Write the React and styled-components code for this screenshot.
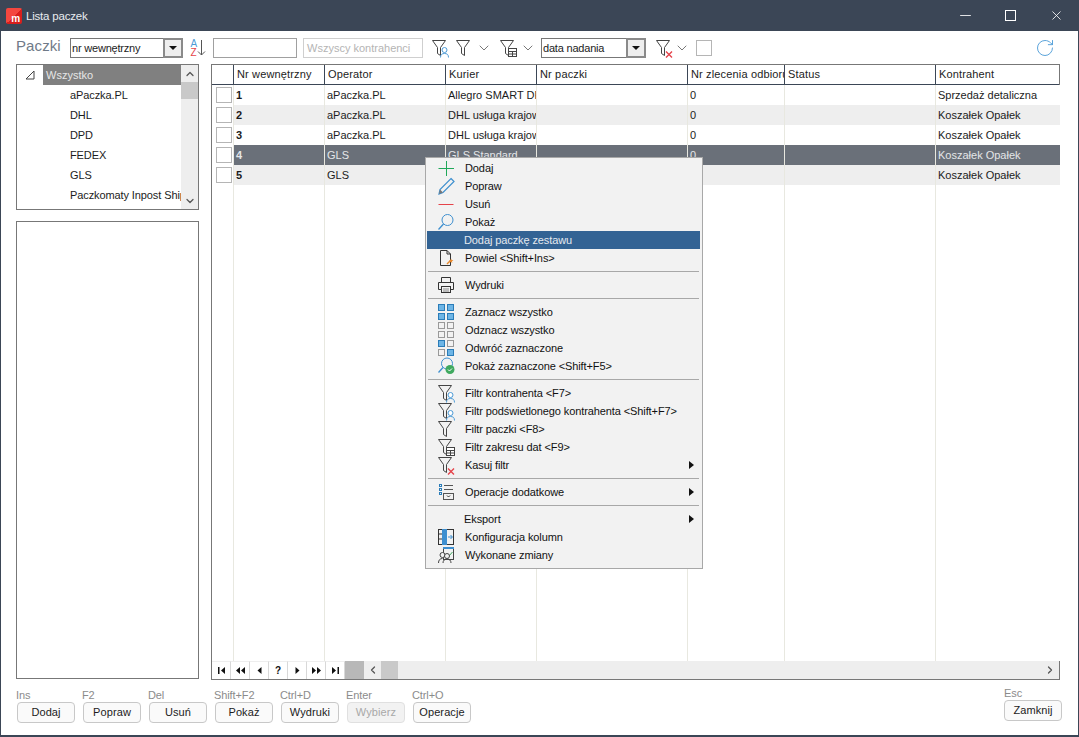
import React from "react";
import styled, { createGlobalStyle } from "styled-components";
import { ChevronDown, ChevronUp, ChevronLeft, ChevronRight, Minus, X, RotateCw } from "lucide-react";

const GlobalStyle = createGlobalStyle`
  html, body { margin: 0; padding: 0; background: #fff; }
  body { font-family: "Liberation Sans", Arial, sans-serif; font-size: 11px; color: #1c1c1c; }
  * { box-sizing: border-box; }
`;

const Window = styled.div`
  position: relative;
  width: 1079px;
  height: 737px;
  display: flex;
  flex-direction: column;
  border: 1px solid #3b4656;
  border-top: 0;
  border-bottom-width: 2px;
  overflow: hidden;
`;
const TitleBar = styled.div`
  height: 31px;
  flex: none;
  margin: 0 -1px;
  background: #3b4656;
  display: flex;
  align-items: center;
  padding-left: 6px;
  color: #e9ecef;
  font-size: 11.5px;
  letter-spacing: -0.2px;
`;
const AppLogo = styled.div`
  width: 16px;
  height: 16px;
  border-radius: 2px;
  background: linear-gradient(135deg, #f4473f 0 50%, #d81f1c 50%);
  color: #fff;
  font-weight: 700;
  font-size: 10px;
  line-height: 11px;
  text-align: right;
  padding: 5px 2px 0 0;
  margin-right: 4px;
`;
const WinControls = styled.div`
  margin-left: auto;
  display: flex;
  align-items: center;
  padding-right: 15px;
  gap: 30px;
  color: #fff;
`;
const MaximizeBox = styled.div`
  width: 11px;
  height: 11px;
  margin: 0 3px 0 1px;
  border: 1px solid #fff;
`;
const Content = styled.div`
  flex: 1;
  min-height: 0;
  display: flex;
  flex-direction: column;
  padding: 7px 18px 0 15px;
`;
const Toolbar = styled.div`
  height: 20px;
  flex: none;
  display: flex;
  align-items: center;
`;
const PageLabel = styled.div`
  width: 54px;
  font-size: 15px;
  letter-spacing: 0.1px;
  color: #6f7a88;
  margin-top: -5px;
`;
const ToolIcon = styled.div`
  margin-left: ${(p) => p.$ml || 0}px;
  display: flex;
  align-items: center;
  color: #555;
`;
const RefreshIcon = styled.div`
  margin-left: auto;
  margin-right: 5px;
  display: flex;
  color: #4d9bd6;
`;
const Select = styled.div`
  width: ${(p) => p.$w}px;
  margin-left: ${(p) => p.$ml || 0}px;
  height: 20px;
  display: flex;
  border: 1px solid #777;
  font-size: 11px;
  letter-spacing: -0.2px;
`;
const SelectText = styled.div`
  flex: 1;
  padding-left: 1px;
  line-height: 18px;
  white-space: nowrap;
  overflow: hidden;
`;
const SelectButton = styled.div`
  width: 20px;
  border: 2px solid #8a8a8a;
  margin: -1px;
  background: #eee;
  display: flex;
  align-items: center;
  justify-content: center;
  &::after {
    content: "";
    border: 4px solid transparent;
    border-top: 4px solid #111;
    border-bottom: 0;
  }
`;
const TextInput = styled.div`
  width: ${(p) => p.$w}px;
  margin-left: 6px;
  height: 20px;
  line-height: 18px;
  padding-left: 3px;
  font-size: 11px;
  border: 1px solid ${(p) => (p.$light ? "#cfcfcf" : "#a0a0a0")};
  color: #b4b4b4;
  white-space: nowrap;
  overflow: hidden;
`;
const EmptyCheck = styled.div`
  width: 16px;
  height: 16px;
  margin-left: ${(p) => p.$ml || 0}px;
  border: 1px solid #b5b5b5;
  background: #fff;
`;
const Main = styled.div`
  flex: none;
  height: 616px;
  margin-top: 6px;
  display: flex;
  gap: 12px;
`;
const LeftColumn = styled.div`
  width: 183px;
  display: flex;
  flex-direction: column;
  gap: 11px;
`;
const TreeBox = styled.div`
  height: 146px;
  flex: none;
  display: flex;
  border: 1px solid #777;
`;
const TreeList = styled.div`
  flex: 1;
  min-width: 0;
  overflow: hidden;
`;
const TreeRoot = styled.div`
  height: 20px;
  display: flex;
  align-items: center;
  padding-left: 8px;
`;
const RootLabel = styled.div`
  margin-left: 8px;
  flex: 1;
  height: 20px;
  line-height: 20px;
  padding-left: 3px;
  background: #808080;
  color: #e6e6e6;
`;
const TreeItem = styled.div`
  height: 20px;
  line-height: 20px;
  padding-left: 53px;
  white-space: nowrap;
  letter-spacing: -0.1px;
`;
const VScroll = styled.div`
  width: 17px;
  flex: none;
  background: #eeeeee;
  display: flex;
  flex-direction: column;
  align-items: center;
`;
const VScrollArrow = styled.div`
  height: 17px;
  display: flex;
  align-items: center;
  justify-content: center;
  margin-top: ${(p) => (p.$end ? "auto" : 0)};
  color: #555;
`;
const VThumb = styled.div`
  width: 17px;
  height: 17px;
  background: #c9c9c9;
`;
const DetailBox = styled.div`
  flex: 1;
  margin-bottom: 1px;
  border: 1px solid #777;
`;
const GridBox = styled.div`
  flex: 1;
  min-width: 0;
  display: flex;
  flex-direction: column;
  border: 1px solid #777;
`;
const COLS = "22px 91px 121px 91px 151px 97px 151px 124px";
const HeaderRow = styled.div`
  display: grid;
  grid-template-columns: ${COLS};
  height: 20px;
  border-bottom: 1px solid #3b4656;
  flex: none;
`;
const HeaderCell = styled.div`
  border-right: 1px solid #3b4656;
  padding-left: 3px;
  line-height: 19px;
  white-space: nowrap;
  overflow: hidden;
  letter-spacing: 0.15px;
  &:last-child { border-right: 0; }
`;
const GridRow = styled.div`
  display: grid;
  grid-template-columns: ${COLS};
  height: ${(p) => (p.$fill ? "auto" : "20px")};
  flex: ${(p) => (p.$fill ? "1" : "none")};
`;
const CheckCell = styled.div`
  background: #fff;
  border-right: 1px solid #e8e8e0;
  padding: 2px 0 0 4px;
`;
const Cell = styled.div`
  background: ${(p) => (p.$selected ? "#6a7079" : p.$alt ? "#eeeeee" : "#fff")};
  color: ${(p) => (p.$selected ? "#e4e6e8" : "#1c1c1c")};
  font-weight: ${(p) => (p.$bold ? 700 : 400)};
  border-right: 1px solid #e8e8e0;
  padding-left: 2px;
  line-height: 20px;
  white-space: nowrap;
  overflow: hidden;
  &:last-child { border-right: 0; }
`;
const BottomBar = styled.div`
  height: 18px;
  flex: none;
  display: flex;
  background: #eeeeee;
`;
const NavButton = styled.div`
  width: 19px;
  background: #fff;
  border-right: 1px solid #d8d8d8;
  border-top: 1px solid #eee;
  display: flex;
  align-items: center;
  justify-content: center;
  font-weight: 700;
  font-size: 10px;
  color: #111;
`;
const NavGap = styled.div`
  width: 19px;
  background: #b8b8b8;
`;
const HArrow = styled.div`
  width: 17px;
  display: flex;
  align-items: center;
  justify-content: center;
  color: #555;
  margin-left: ${(p) => (p.$end ? "auto" : 0)};
  margin-right: ${(p) => (p.$end ? "1px" : 0)};
`;
const HThumb = styled.div`
  width: 17px;
  background: #c9c9c9;
`;
const Footer = styled.div`
  flex: 1;
  display: flex;
  justify-content: space-between;
  padding-top: 9px;
`;
const FooterGroup = styled.div`
  display: flex;
`;
const Action = styled.div`
  width: 66px;
`;
const Hint = styled.div`
  height: 13px;
  line-height: 13px;
  color: #8b8b8b;
  font-size: 11px;
  letter-spacing: -0.1px;
  white-space: nowrap;
`;
const Button = styled.div`
  width: 58px;
  height: 21px;
  margin-left: ${(p) => (p.$flush ? 0 : 1)}px;
  border: 1px solid #c8c8c8;
  border-radius: 4px;
  background: #fafafa;
  text-align: center;
  line-height: 19px;
  letter-spacing: 0.1px;
  color: ${(p) => (p.$disabled ? "#a8a8a8" : "#1c1c1c")};
  ${(p) => p.$disabled && "background: #f2f2f2; border-color: #e0e0e0;"}
`;
const CloseAction = styled.div`
  width: 58px;
  margin: -2px -2px 0 0;
`;
const Menu = styled.div`
  position: absolute;
  left: 424px;
  top: 157px;
  width: 278px;
  height: 412px;
  background: #f2f2f2;
  border: 1px solid #a8a8a8;
  padding: 1px 2px 0 1px;
`;
const MenuItem = styled.div`
  height: 18px;
  display: flex;
  align-items: center;
  position: relative;
  padding-left: ${(p) => (p.$noIcon ? 37 : 38)}px;
  letter-spacing: -0.1px;
  white-space: nowrap;
  background: ${(p) => (p.$active ? "#336394" : "transparent")};
  color: ${(p) => (p.$active ? "#e4e9ef" : "#111")};
`;
const MenuIcon = styled.span`
  position: absolute;
  left: 9px;
  top: 0;
  width: 20px;
  height: 18px;
  display: flex;
  align-items: center;
  justify-content: center;
`;
const SubArrow = styled.span`
  position: absolute;
  right: 6px;
  top: 5px;
  border: 4px solid transparent;
  border-left: 5px solid #111;
  border-right: 0;
`;
const MenuSep = styled.div`
  height: 9px;
  margin: 0 1px;
  display: flex;
  align-items: center;
  &::after {
    content: "";
    flex: 1;
    height: 1px;
    margin-top: -1px;
    background: #a8a8a8;
  }
`;

const Svg = ({ w = 20, h = 18, children }) => (
  <svg width={w} height={h} viewBox={`0 0 ${w} ${h}`} fill="none" style={{ display: "block" }}>
    {children}
  </svg>
);

const FUNNEL = "M1.5 1.5H14.5L9.5 8.5V16.5L6.5 14.5V8.5Z";

// small funnel with an optional badge in the lower right
const FunnelIcon = ({ badge }) => (
  <Svg w={19} h={19}>
    <path d={FUNNEL} stroke="#444" strokeWidth="1" />
    {badge === "user" && (
      <g stroke="#4d9bd6" strokeWidth="1">
        <circle cx="13.5" cy="11" r="2.5" fill="#fff" />
        <path d="M9.5 18.5C9.5 15.5 11 14.5 13.5 14.5S17.5 15.5 17.5 18.5" />
      </g>
    )}
    {badge === "table" && (
      <g stroke="#444" strokeWidth="1">
        <rect x="9.5" y="9.5" width="8" height="8" fill="#fff" />
        <path d="M9.5 12.5H17.5M9.5 15H17.5M13.5 12.5V17.5" />
      </g>
    )}
    {badge === "x" && <path d="M11 12.5L17 18.5M17 12.5L11 18.5" stroke="#e5434a" strokeWidth="1.4" />}
  </Svg>
);

const SortIcon = () => (
  <Svg w={18} h={18}>
    <text x="1.5" y="8" fontSize="10" fill="#4d9bd6" fontFamily="Liberation Sans">A</text>
    <text x="1.5" y="17" fontSize="10" fill="#e5434a" fontFamily="Liberation Sans">Z</text>
    <path d="M12.5 1V16M9 12.5L12.5 16L16 12.5" stroke="#555" />
  </Svg>
);

const PlusIcon = () => (
  <Svg>
    <path d="M10.5 2V17M2.5 9.5H18" stroke="#21a85a" />
  </Svg>
);
const PencilIcon = () => (
  <Svg>
    <path d="M15 1.5L18 4.5L7 15.5L3 17L4 12.5Z" stroke="#3f90cf" strokeWidth="1.2" />
    <path d="M3 17L4 12.5L7 15.5Z" fill="#777" />
  </Svg>
);
const MinusIcon = () => (
  <Svg>
    <path d="M2.5 9.5H17.5" stroke="#e5434a" />
  </Svg>
);
const SearchIcon = () => (
  <Svg>
    <circle cx="11.5" cy="7" r="5.5" stroke="#3f90cf" />
    <path d="M7.5 11L2.5 16.5" stroke="#3f90cf" strokeWidth="1.3" />
  </Svg>
);
const CopyIcon = () => (
  <Svg>
    <path d="M4.5 1.5H11L14.5 5V16.5H4.5Z" stroke="#333" />
    <path d="M11 1.5V5H14.5" stroke="#333" />
    <path d="M11 15L15 11" stroke="#e98a2f" strokeWidth="1.5" />
    <path d="M15 9.5L15.7 11L17.5 11.3L16 12.3L16.3 14L15 13L13.5 13.5L14.2 12L13 11L14.7 11Z" fill="#e98a2f" />
  </Svg>
);
const PrinterIcon = () => (
  <Svg>
    <path d="M5.5 6V1.5H14.5V6M5.5 13.5H2.5V6.5H17.5V13.5H14.5" stroke="#333" />
    <rect x="5.5" y="10.5" width="9" height="6" stroke="#333" />
    <path d="M7 13H13M7 15H13" stroke="#888" />
  </Svg>
);
const GRID_COORDS = [
  [2, 1],
  [11, 1],
  [2, 10],
  [11, 10],
];
const GridIcon = ({ filled }) => (
  <Svg>
    {GRID_COORDS.map(([x, y], i) => (
      <rect
        key={i}
        x={x + 0.5}
        y={y + 0.5}
        width="6"
        height="6"
        fill={filled[i] ? "#6db5e6" : "#f2f2f2"}
        stroke={filled[i] ? "#2a7cb8" : "#999"}
      />
    ))}
  </Svg>
);
const SearchOkIcon = () => (
  <Svg>
    <circle cx="11" cy="6.5" r="5.5" stroke="#3f90cf" />
    <path d="M7 10.5L2.5 15.5" stroke="#3f90cf" strokeWidth="1.3" />
    <circle cx="14" cy="12.5" r="4.5" fill="#3fa95f" />
    <path d="M12 12.5L13.5 14L16 11.5" stroke="#fff" />
  </Svg>
);
const OptionsIcon = () => (
  <Svg>
    <g stroke="#2a7cb8">
      <rect x="3.5" y="1.5" width="2" height="2" />
      <rect x="3.5" y="5.5" width="2" height="2" />
      <rect x="3.5" y="9.5" width="2" height="2" />
    </g>
    <path d="M8 2.5H17M8 6.5H17" stroke="#555" />
    <rect x="7.5" y="10.5" width="10" height="6" stroke="#555" />
    <path d="M11 12.5L12.5 14L14 12.5" stroke="#333" />
  </Svg>
);
const ColumnsIcon = () => (
  <Svg>
    <rect x="2.5" y="1.5" width="15" height="15" stroke="#333" />
    <rect x="6" y="1" width="5" height="16" fill="#3d8fd0" />
    <path d="M2.5 6H6M2.5 11H6" stroke="#333" />
    <path d="M12 9H16M14.5 7L16.5 9L14.5 11" stroke="#3d8fd0" />
  </Svg>
);
const ChangesIcon = () => (
  <Svg>
    <rect x="7.5" y="1.5" width="10" height="12" fill="#f2f2f2" stroke="#444" />
    <path d="M7 2H18" stroke="#3d8fd0" strokeWidth="2" />
    <path d="M11 8L13 10L16.5 6" stroke="#3fa95f" />
    <circle cx="6.5" cy="9" r="2.5" fill="#f2f2f2" stroke="#444" />
    <circle cx="11" cy="10" r="2.5" fill="#f2f2f2" stroke="#444" />
    <path d="M2.5 17C2.5 14 4 12.5 6.5 12.5M7 17C7 14.5 8.5 13 11 13S15 14.5 15 17" stroke="#444" />
  </Svg>
);

const NavGlyph = ({ d }) => (
  <Svg w={11} h={9}>
    <path d={d} fill="#111" />
  </Svg>
);
const NAV_GLYPHS = [
  "M2 1H3.5V8H2ZM9 1V8L5 4.5Z",
  "M5 1V8L1 4.5ZM10 1V8L6 4.5Z",
  "M7.5 1V8L3.5 4.5Z",
  null,
  "M3.5 1V8L7.5 4.5Z",
  "M1 1V8L5 4.5ZM6 1V8L10 4.5Z",
  "M2 1V8L6 4.5ZM7.5 1H9V8H7.5Z",
];

const COLUMNS = ["", "Nr wewnętrzny", "Operator", "Kurier", "Nr paczki", "Nr zlecenia odbioru", "Status", "Kontrahent"];
const ROWS = [
  { cells: ["1", "aPaczka.PL", "Allegro SMART DPD", "", "0", "", "Sprzedaż detaliczna"] },
  { alt: true, cells: ["2", "aPaczka.PL", "DHL usługa krajowa", "", "0", "", "Koszałek Opałek"] },
  { cells: ["3", "aPaczka.PL", "DHL usługa krajowa", "", "0", "", "Koszałek Opałek"] },
  { selected: true, cells: ["4", "GLS", "GLS Standard", "", "0", "", "Koszałek Opałek"] },
  { alt: true, cells: ["5", "GLS", "GLS Standard", "", "0", "", "Koszałek Opałek"] },
];
const CARRIERS = ["aPaczka.PL", "DHL", "DPD", "FEDEX", "GLS", "Paczkomaty Inpost Shipx"];
const ACTIONS = [
  ["Ins", "Dodaj"],
  ["F2", "Popraw"],
  ["Del", "Usuń"],
  ["Shift+F2", "Pokaż"],
  ["Ctrl+D", "Wydruki"],
  ["Enter", "Wybierz", true],
  ["Ctrl+O", "Operacje"],
];

const MENU = [
  { label: "Dodaj", icon: <PlusIcon /> },
  { label: "Popraw", icon: <PencilIcon /> },
  { label: "Usuń", icon: <MinusIcon /> },
  { label: "Pokaż", icon: <SearchIcon /> },
  { label: "Dodaj paczkę zestawu", active: true },
  { label: "Powiel <Shift+Ins>", icon: <CopyIcon /> },
  { sep: true },
  { label: "Wydruki", icon: <PrinterIcon /> },
  { sep: true },
  { label: "Zaznacz wszystko", icon: <GridIcon filled={[1, 1, 1, 1]} /> },
  { label: "Odznacz wszystko", icon: <GridIcon filled={[0, 0, 0, 0]} /> },
  { label: "Odwróć zaznaczone", icon: <GridIcon filled={[1, 0, 0, 1]} /> },
  { label: "Pokaż zaznaczone <Shift+F5>", icon: <SearchOkIcon /> },
  { sep: true },
  { label: "Filtr kontrahenta <F7>", icon: <FunnelIcon badge="user" /> },
  { label: "Filtr podświetlonego kontrahenta <Shift+F7>", icon: <FunnelIcon badge="user" /> },
  { label: "Filtr paczki <F8>", icon: <FunnelIcon /> },
  { label: "Filtr zakresu dat <F9>", icon: <FunnelIcon badge="table" /> },
  { label: "Kasuj filtr", icon: <FunnelIcon badge="x" />, sub: true },
  { sep: true },
  { label: "Operacje dodatkowe", icon: <OptionsIcon />, sub: true },
  { sep: true },
  { label: "Eksport", sub: true },
  { label: "Konfiguracja kolumn", icon: <ColumnsIcon /> },
  { label: "Wykonane zmiany", icon: <ChangesIcon /> },
];

export default function App() {
  return (
    <>
      <GlobalStyle />
      <Window>
        <TitleBar>
          <AppLogo>m</AppLogo>
          Lista paczek
          <WinControls>
            <Minus size={17} strokeWidth={1.2} />
            <MaximizeBox />
            <X size={15} strokeWidth={1.3} />
          </WinControls>
        </TitleBar>
        <Content>
          <Toolbar>
            <PageLabel>Paczki</PageLabel>
            <Select $w={113}>
              <SelectText>nr wewnętrzny</SelectText>
              <SelectButton />
            </Select>
            <ToolIcon $ml={6}>
              <SortIcon />
            </ToolIcon>
            <TextInput $w={84} />
            <TextInput $w={120} $light>Wszyscy kontrahenci</TextInput>
            <ToolIcon $ml={8}>
              <FunnelIcon badge="user" />
            </ToolIcon>
            <ToolIcon $ml={5}>
              <FunnelIcon />
            </ToolIcon>
            <ToolIcon $ml={2}>
              <ChevronDown size={16} strokeWidth={1.2} />
            </ToolIcon>
            <ToolIcon $ml={7}>
              <FunnelIcon badge="table" />
            </ToolIcon>
            <ToolIcon $ml={2}>
              <ChevronDown size={16} strokeWidth={1.2} />
            </ToolIcon>
            <Select $w={105} $ml={5}>
              <SelectText>data nadania</SelectText>
              <SelectButton />
            </Select>
            <ToolIcon $ml={9}>
              <FunnelIcon badge="x" />
            </ToolIcon>
            <ToolIcon>
              <ChevronDown size={16} strokeWidth={1.2} />
            </ToolIcon>
            <EmptyCheck $ml={6} />
            <RefreshIcon>
              <RotateCw size={20} strokeWidth={1.1} />
            </RefreshIcon>
          </Toolbar>
          <Main>
            <LeftColumn>
              <TreeBox>
                <TreeList>
                  <TreeRoot>
                    <Svg w={10} h={10}>
                      <path d="M9 1V9H1Z" stroke="#444" />
                    </Svg>
                    <RootLabel>Wszystko</RootLabel>
                  </TreeRoot>
                  {CARRIERS.map((c) => (
                    <TreeItem key={c}>{c}</TreeItem>
                  ))}
                </TreeList>
                <VScroll>
                  <VScrollArrow>
                    <ChevronUp size={12} strokeWidth={2.5} />
                  </VScrollArrow>
                  <VThumb />
                  <VScrollArrow $end>
                    <ChevronDown size={12} strokeWidth={2.5} />
                  </VScrollArrow>
                </VScroll>
              </TreeBox>
              <DetailBox />
            </LeftColumn>
            <GridBox>
              <HeaderRow>
                {COLUMNS.map((c, i) => (
                  <HeaderCell key={i}>{c}</HeaderCell>
                ))}
              </HeaderRow>
              {ROWS.map((row, r) => (
                <GridRow key={r}>
                  <CheckCell>
                    <EmptyCheck />
                  </CheckCell>
                  {row.cells.map((v, c) => (
                    <Cell key={c} $alt={row.alt} $selected={row.selected} $bold={c === 0}>
                      {v}
                    </Cell>
                  ))}
                </GridRow>
              ))}
              <GridRow $fill>
                <CheckCell />
                {COLUMNS.slice(1).map((c) => (
                  <Cell key={c} />
                ))}
              </GridRow>
              <BottomBar>
                {NAV_GLYPHS.map((d, i) => (
                  <NavButton key={i}>{d ? <NavGlyph d={d} /> : "?"}</NavButton>
                ))}
                <NavGap />
                <HArrow>
                  <ChevronLeft size={12} strokeWidth={2.5} />
                </HArrow>
                <HThumb />
                <HArrow $end>
                  <ChevronRight size={12} strokeWidth={2.5} />
                </HArrow>
              </BottomBar>
            </GridBox>
          </Main>
          <Footer>
            <FooterGroup>
              {ACTIONS.map(([hint, label, disabled]) => (
                <Action key={label}>
                  <Hint>{hint}</Hint>
                  <Button $disabled={disabled}>{label}</Button>
                </Action>
              ))}
            </FooterGroup>
            <CloseAction>
              <Hint>Esc</Hint>
              <Button $flush>Zamknij</Button>
            </CloseAction>
          </Footer>
        </Content>
        <Menu>
          {MENU.map((m, i) =>
            m.sep ? (
              <MenuSep key={i} />
            ) : (
              <MenuItem key={i} $active={m.active} $noIcon={!m.icon}>
                {m.icon && <MenuIcon>{m.icon}</MenuIcon>}
                {m.label}
                {m.sub && <SubArrow />}
              </MenuItem>
            )
          )}
        </Menu>
      </Window>
    </>
  );
}
